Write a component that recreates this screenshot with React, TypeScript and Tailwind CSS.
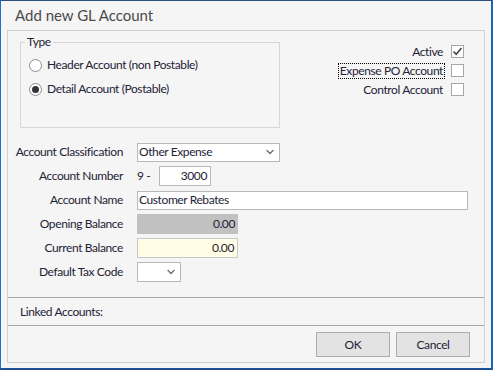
import { ChevronDown } from 'lucide-react';

const font = { fontFamily: 'Lato, "Noto Sans", sans-serif' };

const Radio = ({ checked, label }: { checked?: boolean; label: string }) => (
  <div className="flex items-center gap-[5px] h-[24px]">
    <span className="w-[13px] h-[13px] rounded-full border border-[#8c8c8c] bg-white flex items-center justify-center">
      {checked && <span className="w-[7px] h-[7px] rounded-full bg-[#333]" />}
    </span>
    <span>{label}</span>
  </div>
);

const Check = ({ label, checked, focused }: { label: string; checked?: boolean; focused?: boolean }) => (
  <div className="flex items-center justify-end gap-[6px] h-[19px]">
    <span className={focused ? 'border border-dotted border-black px-px leading-[14px]' : 'px-[2px]'}>{label}</span>
    <span className="w-[13px] h-[13px] border border-[#a6a6a6] bg-white flex items-center justify-center">
      {checked && (
        <svg width="11" height="11" viewBox="0 0 11 11">
          <path d="M1.5 5.5 L4.2 8.2 L9.5 2" fill="none" stroke="#444" strokeWidth="1.6" />
        </svg>
      )}
    </span>
  </div>
);

const Row = ({ label, children }: { label: string; children: React.ReactNode }) => (
  <div className="flex items-center h-[24px]">
    <div className="w-[116px] text-right pr-px">{label}</div>
    <div className="ml-[13px] flex items-center">{children}</div>
  </div>
);

export default function App() {
  return (
    <div
      className="w-[493px] h-[370px] bg-[#f5f5f5] border-t border-t-[#2c4f84] border-l border-l-[#1b72c8] border-r-2 border-r-[#1d64b4] border-b-2 border-b-[#1f4f94] flex flex-col text-[12px] tracking-[-0.4px] text-[#1e2236] whitespace-nowrap"
      style={font}
    >
      {/* Title */}
      <div className="h-[29px] pl-[14px] flex items-center text-[15px] tracking-normal text-[#4a4a4a]">Add new GL Account</div>

      {/* Main panel */}
      <div className="mx-[6px] h-[333px] border border-[#cfcfcf] flex flex-col">
        <div className="flex justify-between pl-[12px] pr-[20px] pt-[11px]">
          <div className="relative w-[260px] h-[86px] border border-[#d6d6d6] pl-[8px] pt-[10px]">
            <span className="absolute -top-[9px] left-[4px] px-[2px] bg-[#f5f5f5] leading-[16px]">Type</span>
            <Radio label="Header Account (non Postable)" />
            <Radio checked label="Detail Account (Postable)" />
          </div>
          <div className="flex flex-col">
            <Check label="Active" checked />
            <Check label="Expense PO Account" focused />
            <Check label="Control Account" />
          </div>
        </div>

        <div className="mt-[12px] flex flex-col">
          <Row label="Account Classification">
            <div className="w-[143px] h-[19px] bg-white border border-[#b8b8b8] flex items-center justify-between pl-[1px] pr-[3px]">
              <span>Other Expense</span>
              <ChevronDown size={12} strokeWidth={3} className="text-[#777]" />
            </div>
          </Row>
          <Row label="Account Number">
            <span className="w-[22px]">9 -</span>
            <div className="w-[52px] h-[20px] bg-white border border-[#b8b8b8] flex items-center justify-end pr-[3px]">3000</div>
          </Row>
          <Row label="Account Name">
            <div className="w-[331px] h-[19px] bg-white border border-[#b8b8b8] flex items-center pl-[1px]">Customer Rebates</div>
          </Row>
          <Row label="Opening Balance">
            <div className="w-[101px] h-[20px] bg-[#c1c1c1] flex items-center justify-end pr-[3px]">0.00</div>
          </Row>
          <Row label="Current Balance">
            <div className="w-[101px] h-[20px] bg-[#fffde4] border border-[#c8c8c8] flex items-center justify-end pr-[3px]">0.00</div>
          </Row>
          <Row label="Default Tax Code">
            <div className="w-[44px] h-[20px] bg-white border border-[#b8b8b8] flex items-center justify-end pr-[3px]">
              <ChevronDown size={12} strokeWidth={3} className="text-[#777]" />
            </div>
          </Row>
        </div>

        <div className="mt-auto border-t border-[#a9a9a9] h-[28px] flex items-center pl-[12px]">Linked Accounts:</div>
        <div className="border-t border-[#a9a9a9] h-[37px] flex justify-end items-start gap-[6px] pt-[6px] pr-[14px]">
          <button className="w-[74px] h-[25px] bg-[#e3e3e3] border border-[#acacac]">OK</button>
          <button className="w-[74px] h-[25px] bg-[#e3e3e3] border border-[#acacac]">Cancel</button>
        </div>
      </div>
    </div>
  );
}
